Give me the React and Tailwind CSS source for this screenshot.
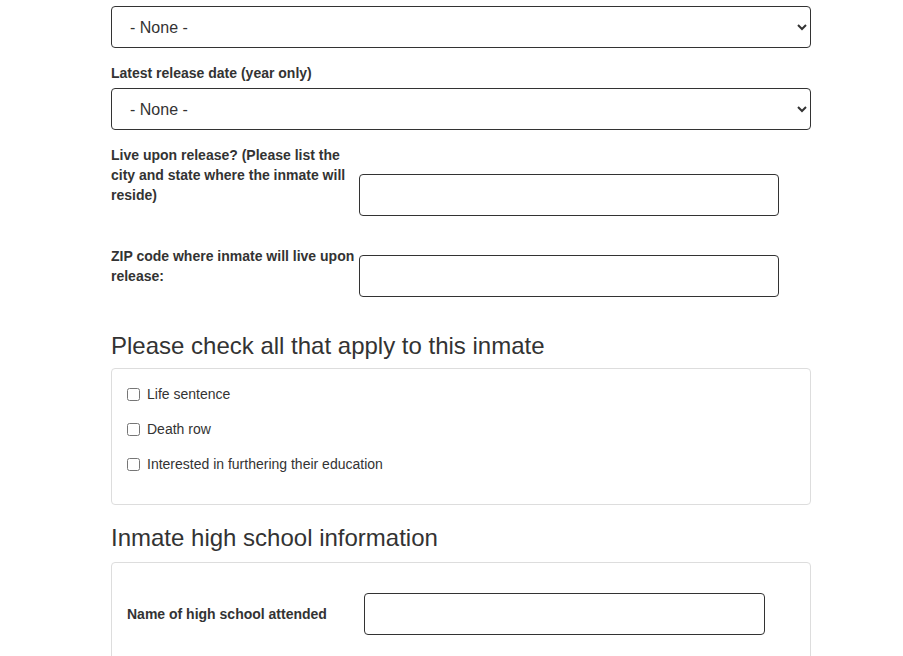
import React from 'react';

function SelectField({ className = '' }) {
  return (
    <select
      defaultValue=""
      className={`block w-full h-[42px] rounded-[4px] border border-[#333] bg-white pl-[14px] pr-2 text-[16px] text-[#333] ${className}`}
    >
      <option value="">- None -</option>
    </select>
  );
}

function TextRow({ label, className = '' }) {
  return (
    <div className={`flex items-end ${className}`}>
      <label className="w-[248px] mb-[11px] text-[14px] leading-[20px] font-bold text-[#333]">{label}</label>
      <input
        type="text"
        className="w-[420px] h-[42px] rounded-[4px] border border-[#333] bg-white px-3"
      />
    </div>
  );
}

const checks = ['Life sentence', 'Death row', 'Interested in furthering their education'];

export default function App() {
  return (
    <div className="min-h-screen bg-white font-['Liberation_Sans',Arial,sans-serif] text-[#333]">
      <div className="w-[700px] ml-[111px] pt-[6px] pb-10">
        <SelectField />

        <label className="block mt-[15px] mb-[5px] text-[14px] leading-[20px] font-bold">
          Latest release date (year only)
        </label>
        <SelectField />

        <TextRow
          className="mt-[15px]"
          label="Live upon release? (Please list the city and state where the inmate will reside)"
        />
        <TextRow
          className="mt-[30px]"
          label="ZIP code where inmate will live upon release:"
        />

        <h2 className="mt-[35px] text-[24px] leading-[28px] font-normal">
          Please check all that apply to this inmate
        </h2>
        <div className="mt-[8px] rounded-[4px] border border-[#ddd] p-[15px]">
          {checks.map((c) => (
            <label key={c} className="flex items-center h-[20px] mb-[15px] text-[14px] leading-[20px]">
              <input type="checkbox" className="w-[13px] h-[13px] m-0 mr-[7px] accent-[#333]" />
              <span>{c}</span>
            </label>
          ))}
        </div>

        <h2 className="mt-[19px] text-[24px] leading-[28px] font-normal">
          Inmate high school information
        </h2>
        <div className="mt-[10px] rounded-[4px] border border-[#ddd] px-[15px] pt-[30px] pb-[30px]">
          <div className="flex items-center">
            <label className="w-[237px] text-[14px] leading-[20px] font-bold">Name of high school attended</label>
            <input
              type="text"
              className="w-[401px] h-[42px] rounded-[4px] border border-[#333] bg-white px-3"
            />
          </div>
        </div>
      </div>
    </div>
  );
}
